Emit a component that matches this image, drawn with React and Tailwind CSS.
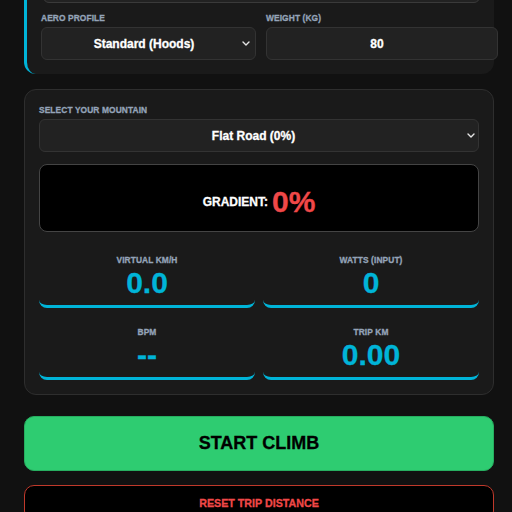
import React from "react";

const Chevron = () => (
  <svg width="8" height="5" viewBox="0 0 8 5" className="shrink-0">
    <path d="M1 1 L4 4 L7 1" fill="none" stroke="#e5e5e5" strokeWidth="1.4" strokeLinecap="round" strokeLinejoin="round" />
  </svg>
);

const Label = ({ children, className = "" }) => (
  <div className={"text-[8.4px] leading-[10px] font-bold uppercase tracking-[0.1px] text-[#94a3b8] " + className}>
    {children}
  </div>
);

const Stat = ({ label, value }) => (
  <div className="h-[64px] flex flex-col items-center pt-[11px] rounded-lg border-b-[3px] border-[#00b4d8]">
    <Label>{label}</Label>
    <div className="mt-[3px] text-[30px] leading-none font-bold text-[#00b4d8]">{value}</div>
  </div>
);

export default function App() {
  return (
    <div
      className="min-h-screen bg-[#111111] overflow-hidden [-webkit-text-stroke:0.3px]"
      style={{ fontFamily: '"Liberation Sans", Arial, sans-serif' }}
    >
      <div className="ml-[24px] w-[470px]">
        {/* Card 1 (top cut off) */}
        <div className="-mt-[60px] bg-[#1a1a1a] border-l-[3px] border-[#00b4d8] rounded-xl pl-[14px] pr-[14px] pt-[14px] pb-[14px]">
          <div className="ml-[2px] h-[49px] rounded-md bg-[#222222] border border-[#3a3a3a]"></div>
          <div className="mt-[10px] flex gap-[10px]">
            <div className="w-[215px] shrink-0">
              <Label>Aero Profile</Label>
              <div className="mt-[4px] h-[33px] rounded-md bg-[#222222] border border-[#333333] flex items-center pr-[5px]">
                <div className="flex-1 text-center text-white font-bold text-[12px] pl-[4px]">Standard (Hoods)</div>
                <Chevron />
              </div>
            </div>
            <div className="w-[232px] shrink-0">
              <Label>Weight (kg)</Label>
              <div className="mt-[4px] h-[33px] rounded-md bg-[#222222] border border-[#333333] flex items-center justify-center pr-[10px]">
                <span className="text-white font-bold text-[12px]">80</span>
              </div>
            </div>
          </div>
        </div>

        {/* Card 2 */}
        <div className="mt-[15px] bg-[#1a1a1a] border border-[#2e2e2e] rounded-xl px-[14px] pt-[15px] pb-[14px]">
          <Label>Select your mountain</Label>
          <div className="mt-[4px] h-[33px] rounded-md bg-[#222222] border border-[#333333] flex items-center pr-[3px]">
            <div className="flex-1 text-center text-white font-bold text-[12px]">Flat Road (0%)</div>
            <Chevron />
          </div>
          <div className="mt-[12px] h-[68px] rounded-lg bg-black border-[1.5px] border-[#444444] flex items-center justify-center pt-[7px]">
            <span className="text-white font-bold text-[12px] leading-none">GRADIENT:</span>
            <span className="ml-[4px] text-[#f04848] font-bold text-[30px] leading-none">0%</span>
          </div>
          <div className="mt-[12px] grid grid-cols-2 gap-x-[8px] gap-y-[8px]">
            <Stat label="Virtual km/h" value="0.0" />
            <Stat label="Watts (input)" value="0" />
            <Stat label="BPM" value="--" />
            <Stat label="Trip km" value="0.00" />
          </div>
        </div>

        <div className="mt-[21px] h-[55px] rounded-[10px] bg-[#2ecc71] border border-[#27ae60] flex items-center justify-center">
          <span className="text-black font-bold text-[18px]">START CLIMB</span>
        </div>

        <div className="mt-[14px] h-[36px] rounded-[10px] bg-black border-[1.5px] border-[#c0392b] flex items-center justify-center">
          <span className="text-[#f04848] font-bold text-[10.7px]">RESET TRIP DISTANCE</span>
        </div>
      </div>
    </div>
  );
}
